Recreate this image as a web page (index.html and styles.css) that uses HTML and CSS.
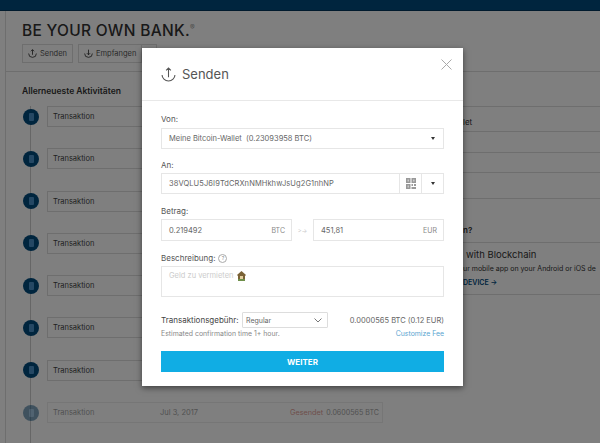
FILE: index.html
```html
<!DOCTYPE html>
<html>
    <head>
        <meta charset="utf-8">
        <title>Senden</title>
        <link rel="stylesheet" href="styles.css">
    </head>
    <body>
        <div class="topbar"></div>
        <div class="page">
            <div class="head">
                <h1>BE YOUR OWN BANK.<sup>®</sup></h1>
                <div class="head-btns">
                    <span class="hbtn">
                        <svg width="9" height="9" viewBox="0 0 14 14"><path d="M1 7a6 6 0 0 0 12 0M7 9V1M4.500 3.500 7 1l2.500 2.500" fill="none" stroke="#333" stroke-width="1.300"/></svg>
                        Senden
                    </span>
                    <span class="hbtn">
                        <svg width="9" height="9" viewBox="0 0 14 14"><path d="M1 7a6 6 0 0 0 12 0M7 1v8M4.500 6.500 7 9l2.500-2.500" fill="none" stroke="#333" stroke-width="1.300"/></svg>
                        Empfangen
                    </span>
                    <span class="hbtn hbtn-more"></span>
                </div>
            </div>
            <div class="cols">
                <div class="feed">
                    <h2>Allerneueste Aktivitäten</h2>
                    <div class="item"><i class="dot"><b></b></i><div class="row"><span>Transaktion</span></div></div>
                    <div class="item"><i class="dot"><b></b></i><div class="row"><span>Transaktion</span></div></div>
                    <div class="item"><i class="dot"><b></b></i><div class="row"><span>Transaktion</span></div></div>
                    <div class="item"><i class="dot"><b></b></i><div class="row"><span>Transaktion</span></div></div>
                    <div class="item"><i class="dot"><b></b></i><div class="row"><span>Transaktion</span></div></div>
                    <div class="item"><i class="dot"><b></b></i><div class="row"><span>Transaktion</span></div></div>
                    <div class="item"><i class="dot"><b></b></i><div class="row"><span>Transaktion</span></div></div>
                    <div class="item faded"><i class="dot"><b></b></i><div class="row"><span>Transaktion</span><span class="date">Jul 3, 2017</span><span class="sent">Gesendet</span><span class="amount">0.0600565 BTC</span></div></div>
                </div>
                <div class="side">
                    <div class="side-list">
                        <div class="side-row">llet</div>
                        <div class="side-row"></div>
                        <div class="side-row"></div>
                        <div class="side-row"></div>
                    </div>
                    <div class="side-q">n?</div>
                    <div class="side-card">
                        <h3>with Blockchain</h3>
                        <p>ur mobile app on your Android or iOS de</p>
                        <a>DEVICE →</a>
                    </div>
                </div>
            </div>
        </div>

        <div class="overlay">
            <div class="modal">
                <div class="modal-head">
                    <svg width="15" height="15" viewBox="0 0 14 14"><path d="M1 7.500a6 5.500 0 0 0 12 0M7 9.500V1M4.800 3.200 7 1l2.200 2.200" fill="none" stroke="#555" stroke-width="1"/></svg>
                    <span>Senden</span>
                    <svg class="close" width="11" height="11" viewBox="0 0 11 11"><path d="M.5.500l10 10M10.500.500l-10 10" stroke="#aaa" stroke-width="1" fill="none"/></svg>
                </div>
                <div class="modal-body">
                    <label>Von:</label>
                    <div class="field sel">
                        <span>Meine Bitcoin-Wallet&nbsp; (0.23093958 BTC)</span>
                        <i class="caret"></i>
                    </div>

                    <label>An:</label>
                    <div class="addr">
                        <div class="field grow"><span class="addr-text">38VQLU5J6I9TdCRXnNMHkhwJsUg2G1nhNP</span></div>
                        <div class="field qr">
                            <svg width="10" height="11" viewBox="0 0 10 11"><path d="M0 0h4.500v5H0zM5.500 0H10v5H5.500zM0 6h4.500v5H0zM5.500 6H7v2H5.500zM8 6h2v2H8zM5.500 9H10v2H5.500z" fill="#999"/><path d="M1.500 1.500H3v2H1.500zM7 1.500h1.500v2H7zM1.500 7.500H3v2H1.500z" fill="#ccc"/></svg>
                        </div>
                        <div class="field drop"><i class="caret"></i></div>
                    </div>

                    <label>Betrag:</label>
                    <div class="amounts">
                        <div class="field amt"><span>0.219492</span><em>BTC</em></div>
                        <span class="swap">&gt;-&gt;</span>
                        <div class="field amt"><span>451,81</span><em>EUR</em></div>
                    </div>

                    <label class="desc-label">Beschreibung: <i class="help">?</i></label>
                    <div class="field area">
                        <span>Geld zu vermieten</span>
                        <svg width="9" height="10" viewBox="0 0 9 10"><path d="M0 4 4.500 0 9 4 8 5v4H1V5z" fill="#7a6236"/><path d="M3 5h3v4H3z" fill="#e3cf9f"/><path d="M1 8h7v2H1z" fill="#6f8f4a"/></svg>
                    </div>

                    <div class="fee">
                        <label>Transaktionsgebühr:</label>
                        <div class="fee-sel">
                            <span>Regular</span>
                            <svg width="8" height="5" viewBox="0 0 8 5"><path d="M.5.500 4 4 7.500.500" fill="none" stroke="#777"/></svg>
                        </div>
                        <span class="fee-val">0.0000565 BTC (0.12 EUR)</span>
                    </div>
                    <div class="fee-sub">
                        <span>Estimated confirmation time 1+ hour.</span>
                        <a>Customize Fee</a>
                    </div>

                    <button class="go">WEITER</button>
                </div>
            </div>
        </div>
    </body>
</html>
```

FILE: styles.css
```css
html, body { margin: 0; height: 100%; }
body {
    position: relative;
    width: 600px;
    height: 443px;
    overflow: hidden;
    background: #fff;
    font-family: "Inter", "Liberation Sans", sans-serif;
    color: #333;
}

.topbar { height: 10px; background: #004a7c; border-bottom: 1px solid #00345a; }

.page { margin-left: 5px; border-left: 1px solid #ddd; }

.head { height: 61px; padding-left: 16px; border-bottom: 1px solid #ddd; box-sizing: border-box; }
.head h1 {
    margin: 0;
    padding-top: 10px;
    font-size: 15.500px;
    line-height: 19px;
    font-weight: 500;
    letter-spacing: .3px;
    color: #333;
}
.head h1 sup { font-size: 7px; color: #999; line-height: 0; font-weight: 400; }
.head-btns { display: flex; gap: 5px; margin-top: 4px; }
.hbtn {
    display: flex;
    align-items: center;
    gap: 3px;
    height: 17px;
    padding: 0 5px;
    border: 1px solid #ddd;
    font-size: 7.500px;
    color: #555;
}
.hbtn-more { width: 14px; margin-left: -5px; padding: 0; border-left: 0; }

.cols { display: flex; }
.feed {
    width: 377px;
    flex: none;
    padding-left: 17px;
    box-sizing: border-box;
    background-image: linear-gradient(#ccc, #ccc);
    background-size: 1px 100%;
    background-position: 24px 0;
    background-repeat: no-repeat;
}
.feed h2 {
    margin: 0 0 0 -17px;
    padding: 13px 0 9px 16px;
    font-size: 8.500px;
    line-height: 12px;
    font-weight: 600;
    background: #fff;
}

.item { display: flex; align-items: center; gap: 8px; height: 21px; margin-bottom: 21.300px; }
.dot {
    flex: none;
    display: flex;
    align-items: center;
    justify-content: center;
    width: 16px;
    height: 16px;
    border-radius: 50%;
    background: #004a7c;
}
.dot b { width: 5px; height: 8px; background: #4a90c8; border-radius: 1px; }
.row {
    flex: 1;
    min-width: 0;
    display: flex;
    align-items: center;
    height: 21px;
    padding: 0 5px;
    border: 1px solid #ddd;
    font-size: 7.500px;
    color: #444;
    box-sizing: border-box;
    background: #fff;
    white-space: nowrap;
}
.row span { flex: none; width: 107px; }
.row .date { width: 130px; }
.row .sent { width: auto; color: #c0392b; margin-right: 3px; font-size: 7.300px; }
.row .amount { width: auto; font-size: 7.100px; }
.faded { opacity: .5; }

.side { flex: 1; min-width: 0; padding-top: 34px; font-size: 8px; white-space: nowrap; }
.side-list { display: grid; grid-template-rows: 25px 21px 20px 26px; border-bottom: 1px solid #ddd; }
.side-row { border-top: 1px solid #ddd; padding-left: 78px; line-height: 30px; }
.side-q { margin-top: 21px; padding-left: 80px; height: 23px; line-height: 20px; box-sizing: border-box; border-bottom: 1px solid #ddd; font-weight: 600; }
.side-card { height: 52px; box-sizing: border-box; padding: 6px 0 0 80px; border-bottom: 1px solid #ddd; }
.side-card h3 { margin: 0 0 0 3px; font-size: 9.500px; line-height: 12px; font-weight: 400; }
.side-card p { margin: 2px 0; font-size: 7px; line-height: 12px; }
.side-card a { display: block; font-size: 7px; line-height: 12px; font-weight: 600; color: #004a7c; }

.overlay { position: absolute; inset: 0; background: rgba(0, 0, 0, .5); }
.modal {
    position: absolute;
    left: 142px;
    top: 48px;
    width: 321px;
    height: 338px;
    background: #fff;
    box-shadow: 0 2px 6px rgba(0, 0, 0, .5);
}
.modal-head {
    position: relative;
    display: flex;
    align-items: center;
    gap: 6px;
    height: 52px;
    padding: 0 19px;
    border-bottom: 1px solid #e8e8e8;
    font-size: 13px;
    color: #555;
}
.close { position: absolute; top: 11px; right: 11px; }

.modal-body { padding: 13px 19px 0; }
.modal-body label { display: block; font-size: 8px; line-height: 10px; color: #555; margin-bottom: 3px; }

.field {
    display: flex;
    align-items: center;
    height: 21px;
    border: 1px solid #e6e6e6;
    box-sizing: border-box;
    padding: 0 7px;
    font-size: 7.500px;
    color: #666;
}
.sel { justify-content: space-between; margin: 4px 0 11px; padding-right: 8px; }
.caret { width: 0; height: 0; border: 2px solid transparent; border-top: 3px solid #333; border-bottom: 0; }
.addr { display: flex; margin-bottom: 12px; }
.addr-text { letter-spacing: .09px; }
.grow { flex: 1; }
.qr { width: 22px; padding: 0; justify-content: center; border-left: 0; }
.drop { width: 22px; padding: 0; justify-content: center; border-left: 0; }
.amounts { display: flex; align-items: center; margin-bottom: 12px; }
.amt { flex: 1; height: 22px; justify-content: space-between; padding-right: 6px; }
.amt em { font-style: normal; color: #888; font-size: 7px; }
.swap { width: 21px; text-align: center; font-size: 6px; color: #ccc; }

.desc-label { display: flex !important; align-items: center; gap: 3px; }
.help { width: 9px; height: 9px; box-sizing: border-box; border: 1px solid #aaa; border-radius: 50%; font-style: normal; font-size: 5px; line-height: 7px; text-align: center; color: #888; }
.area { height: 31px; align-items: flex-start; padding-top: 4px; gap: 3px; color: #ccc; margin-bottom: 15px; }

.fee { display: flex; align-items: center; height: 16px; }
.fee label { margin: 0; width: 81px; color: #444; }
.fee-sel {
    display: flex;
    align-items: center;
    justify-content: space-between;
    width: 86px;
    height: 16px;
    box-sizing: border-box;
    padding: 0 5px 0 3px;
    border: 1px solid #ddd;
    border-radius: 1px;
    font-size: 7px;
    color: #666;
}
.fee-val { margin-left: auto; font-size: 7.500px; color: #666; }
.fee-sub { display: flex; justify-content: space-between; margin-top: 1px; font-size: 6.900px; line-height: 10px; color: #888; }
.fee-sub a { color: #5aa5d0; }

.go {
    display: block;
    width: 100%;
    height: 21px;
    margin-top: 12px;
    border: 0;
    padding: 0;
    background: #10ade4;
    color: #fff;
    font-family: inherit;
    font-size: 8px;
    font-weight: 700;
}
```
